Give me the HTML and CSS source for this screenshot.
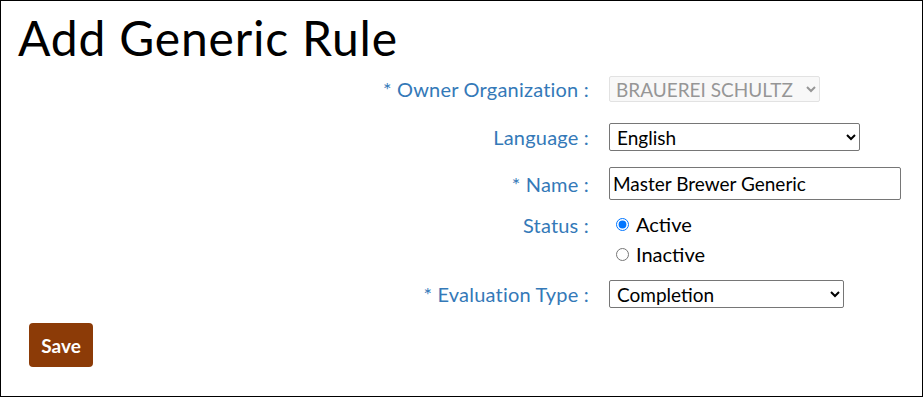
FILE: index.html
```html
<!DOCTYPE html>
<html>
<head>
<meta name="viewport" content="width=device-width, initial-scale=1">
<link rel="stylesheet" href="styles.css">
</head>
<body>
<div class="page">
  <h1>Add Generic Rule</h1>
  <form class="rule-form">
    <div class="row row-owner">
      <label for="owner">* Owner Organization :</label>
      <select id="owner" class="owner" disabled>
        <option>BRAUEREI SCHULTZ</option>
      </select>
    </div>
    <div class="row row-lang">
      <label for="lang">Language :</label>
      <select id="lang" class="lang">
        <option>English</option>
      </select>
    </div>
    <div class="row row-name">
      <label for="name">* Name :</label>
      <input type="text" id="name" class="name" value="Master Brewer Generic">
    </div>
    <div class="row row-status">
      <label>Status :</label>
      <div class="radios">
        <label class="opt"><input type="radio" name="status" checked> Active</label>
        <label class="opt"><input type="radio" name="status"> Inactive</label>
      </div>
    </div>
    <div class="row row-eval">
      <label for="evaltype">* Evaluation Type :</label>
      <select id="evaltype" class="evaltype">
        <option>Completion</option>
      </select>
    </div>
    <button type="submit" class="save">Save</button>
  </form>
</div>
</body>
</html>
```

FILE: styles.css
```css
html, body {margin: 0; padding: 0;}
body {font-family: Lato, "Noto Sans", sans-serif; color: #000;}

.page {
  border: 1px solid #000;
  height: 397px;
  box-sizing: border-box;
  overflow: hidden;
}

h1 {
  font-weight: 400;
  font-size: 48px;
  letter-spacing: 0.8px;
  line-height: 56px;
  margin: 9px 0 0 17px;
}

.row {
  display: flex;
  align-items: center;
}

.row > label {
  width: 608px;
  text-align: right;
  padding-right: 20px;
  box-sizing: border-box;
  color: #3479b8;
  font-size: 20px;
  letter-spacing: 0.2px;
}

select, input[type=text] {
  font-family: inherit;
  font-size: 19px;
  color: #000;
  background: #fff;
  border: 1px solid #767676;
  border-radius: 2px;
  box-sizing: border-box;
  margin: 0;
  padding-left: 3px;
}

.row-owner {margin-top: 10px;}
.owner {
  width: 211px;
  height: 26px;
  color: #6b6b6b;
  background: #f6f6f6;
  border-color: #d6d6d6;
  padding: 0 2px;
}

.row-lang {margin-top: 21px;}
.lang {width: 251px; height: 28px;}

.row-name {margin-top: 16px;}
.name {width: 292px; height: 33px; padding: 1px 3px;}

.row-status {margin-top: 12px; align-items: flex-start;}
.row-status > label {padding-top: 1px;}
.radios {display: flex; flex-direction: column; gap: 6px;}
.opt {font-size: 20px; display: flex; align-items: center;}
.opt input {margin: 0 7px 0 7px; width: 13px; height: 13px;}

.row-eval {margin-top: 14px;}
.evaltype {width: 235px; height: 28px;}

.save {
  margin: 15px 0 0 28px;
  background: #8c3b07;
  color: #fff;
  border: none;
  border-radius: 4px;
  font-family: inherit;
  font-weight: 700;
  font-size: 19px;
  width: 64px;
  height: 44px;
  cursor: pointer;
}
```
